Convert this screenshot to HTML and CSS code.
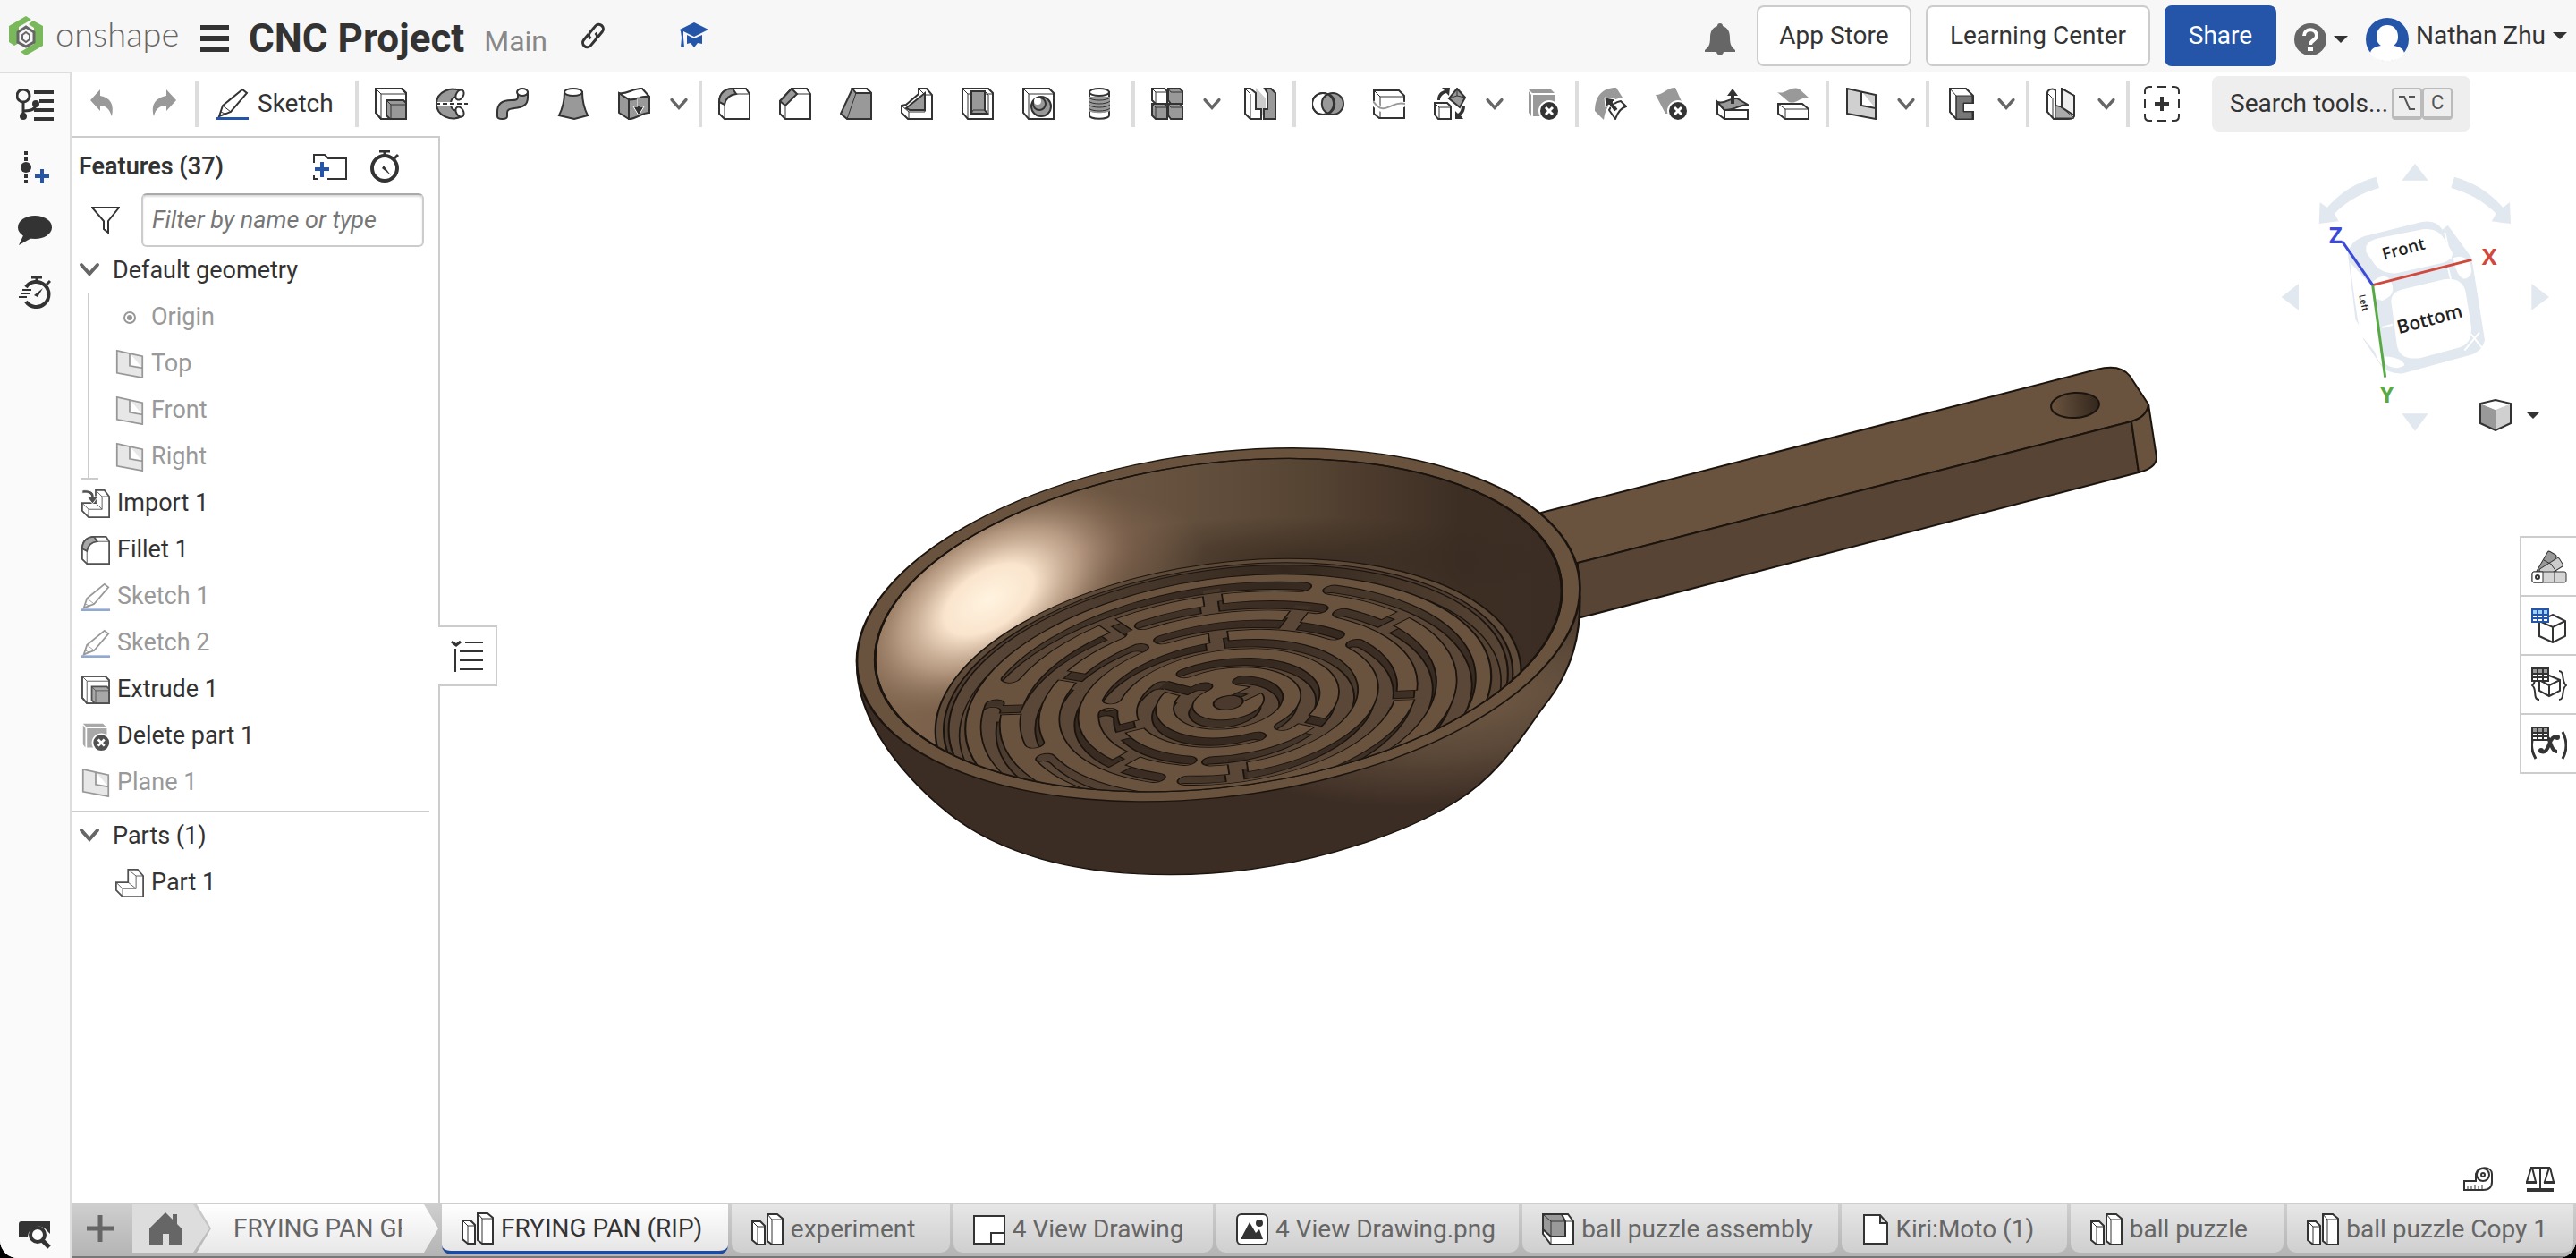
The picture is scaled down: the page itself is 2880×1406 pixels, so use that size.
FILE: index.html
```html
<!DOCTYPE html>
<html lang="en">
<head>
<meta charset="utf-8">
<title>CNC Project | FRYING PAN (RIP)</title>
<link rel="stylesheet" href="styles.css">
</head>
<body>
<svg class="sprite" aria-hidden="true">
  <defs>
    <symbol id="i-chev" viewBox="0 0 24 16"><path d="M3 3l9 10 9-10" fill="none" stroke="#666" stroke-width="4" stroke-linecap="round"/></symbol>
    <symbol id="i-caret" viewBox="0 0 16 8"><path d="M0 0h16l-8 8z" fill="#333"/></symbol>
    <symbol id="i-undo" viewBox="0 0 36 36"><path d="M5 14L16 2v7c11 2 16 9 13 23-3-9-7-12-13-12v6z" fill="#999"/></symbol>
    <symbol id="i-redo" viewBox="0 0 36 36"><path d="M33 14L22 2v7C11 11 4 18 8 32c2-9 7-12 14-12v6z" fill="#999"/></symbol>
    <symbol id="i-sketch" viewBox="0 0 36 36"><path class="o" d="M3 32l4-12L29 2l5 4-18 21z" fill="none"/><path class="t" d="M7 20l9 7M5 27l4 2"/><path d="M0 33h36v3H0z" fill="#2455a8"/></symbol>
    <symbol id="i-extrude" viewBox="0 0 36 36"><path class="o" d="M1 1h29l5 5v29H7l-6-7z"/><path class="t" d="M1 1l6 6v28M7 7h28"/><path class="g" d="M13 14h19l3 3v18H17l-4-4z"/><path class="t" d="M13 14l5 5h17M18 19v16"/><path class="n" d="M1 1h29l5 5v29H7l-6-7z"/></symbol>
    <symbol id="i-revolve" viewBox="0 0 36 36"><path class="g" d="M28 4C18-2 1 4 1 18s17 20 28 14c3-3 2-6-2-9-3 4-10 3-10-5s7-9 10-5c4-2 5-6 1-9z"/><ellipse class="o" cx="27" cy="8" rx="4" ry="6" transform="rotate(30 27 8)"/><ellipse class="o" cx="27" cy="27" rx="4" ry="6" transform="rotate(-30 27 27)"/><path d="M2 18h34" stroke="#fff" stroke-width="4"/><path d="M0 18h36" stroke="#333" stroke-width="2" stroke-dasharray="5 3"/></symbol>
    <symbol id="i-sweep" viewBox="0 0 36 36"><path class="g" d="M24 5v5c0 4-3 4-8 4C6 14 1 18 1 27v5c0 4 11 4 11 0v-4c0-4 3-4 8-5 10-1 15-4 15-12V5z"/><ellipse class="o" cx="29" cy="5" rx="6" ry="4"/></symbol>
    <symbol id="i-loft" viewBox="0 0 36 36"><path class="g" d="M8 5c0 12-3 20-6 26l17 4 15-4c-3-6-6-14-6-26z"/><ellipse class="o" cx="18" cy="5" rx="10" ry="4"/></symbol>
    <symbol id="i-thicken" viewBox="0 0 36 36"><path class="g" d="M1 6l11 7v22L1 28z"/><path class="g" d="M12 13c7 2 13-5 23-3v18c-9 0-14 7-23 7z"/><path class="o" d="M1 6c9 2 16-6 26-5l8 9c-10-2-16 5-23 3z"/><path d="M22 11v10h-5l6 10 6-10h-5V11z" fill="#333" stroke="#fff"/></symbol>
    <symbol id="i-fillet" viewBox="0 0 36 36"><path class="o" d="M1 16C1 6 8 1 16 1h15l4 6v28H7l-6-6z"/><path class="g" d="M1 16C1 6 8 1 16 1l4 6C12 8 8 13 7 19z"/><path class="t" d="M7 19v16M20 7h15"/></symbol>
    <symbol id="i-chamfer" viewBox="0 0 36 36"><path class="o" d="M1 15L14 1h17l4 6v28H7l-6-6z"/><path class="g" d="M1 15L14 1l6 6L7 20z"/><path class="t" d="M7 20v15M20 7h15"/></symbol>
    <symbol id="i-draft" viewBox="0 0 36 36"><path class="g" d="M14 1h16l5 5v29H8l-7-6z"/><path class="o" d="M14 1h16l5 5H18z"/><path class="t" d="M18 6L8 35"/></symbol>
    <symbol id="i-rib" viewBox="0 0 36 36"><path class="o" d="M1 20l5-1 14-12V1h9l6 7v27H8l-7-7z"/><path class="g" d="M6 23L27 6v19H10z"/><path class="t" d="M1 20l8 7v8M9 27h18V8h8M20 1l7 7"/></symbol>
    <symbol id="i-shell" viewBox="0 0 36 36"><path class="o" d="M1 1h29l5 5v29H7l-6-7z"/><path class="t" d="M1 1l6 6v28M7 7h28"/><path class="g" d="M11 4h15v21l3 4H11z"/><path class="t" d="M26 4l4 4v21H11l2-4h13"/></symbol>
    <symbol id="i-hole" viewBox="0 0 36 36"><path class="o" d="M1 1h29l5 5v29H7l-6-7z"/><path class="t" d="M1 1l6 6v28M7 7h28"/><circle class="g" cx="21" cy="21" r="11"/><circle class="g" cx="19" cy="18" r="7"/><circle cx="17" cy="15" r="4" fill="#fff"/></symbol>
    <symbol id="i-thread" viewBox="0 0 36 36"><path class="o" d="M7 5v26c0 5 22 5 22 0V5z"/><path d="M6 10h24v16c-4 3-20 3-24 0z" fill="#999"/><ellipse class="o" cx="18" cy="5" rx="11" ry="4"/><path class="t" d="M6 11c4 4 20 4 24 0M6 15c4 4 20 4 24 0M6 19c4 4 20 4 24 0M6 23c4 4 20 4 24 0"/></symbol>
    <symbol id="i-pattern" viewBox="0 0 36 36"><path class="o" d="M1 1h14l3 3v14H5l-4-4z"/><path class="g" d="M19 1h13l3 3v14H22l-3-4zM1 18h14l3 3v14H5l-4-4zM19 18h13l3 3v14H22l-3-4z"/><path class="t" d="M1 1l4 4h13M5 5v13M19 1l3 4h13M1 18l4 4h13M5 22v13M19 18l3 4h13"/></symbol>
    <symbol id="i-mirror" viewBox="0 0 36 36"><path d="M13 0l11 12v22L13 22z" fill="#ccc"/><path class="o" d="M1 1h6l6 5v18h6v11H7l-6-6z"/><path class="t" d="M1 1l6 6v28"/><path class="g" d="M23 1h7l5 5v29H22V24h4V6z"/></symbol>
    <symbol id="i-bool" viewBox="0 0 36 36"><circle class="g" cx="23" cy="18" r="12"/><circle class="o" cx="12" cy="18" r="12"/><path class="g" d="M18 7a12 12 0 0 1 0 22 12 12 0 0 1 0-22z"/><circle class="n" cx="12" cy="18" r="12"/></symbol>
    <symbol id="i-split" viewBox="0 0 36 36"><path class="o" d="M1 3h28l6 6v25H7l-6-5z"/><path class="t" d="M1 3l7 7h27M8 10v24"/><path d="M0 16c9 12 14 8 19 6s9-5 17-3" fill="none" stroke="#fff" stroke-width="6"/><path d="M0 15c9 12 14 8 19 6s9-5 17-3" fill="none" stroke="#999" stroke-width="2"/></symbol>
    <symbol id="i-transform" viewBox="0 0 36 36"><path class="o" d="M1 17h14l4 4v14H5l-4-5z"/><path class="t" d="M1 17l5 5h13M6 22v13"/><path class="g" d="M26 1l9 10-6 11-12-10z"/><path class="t" d="M26 1v8l9 2M26 9l-9 3"/><path d="M4 14C4 7 8 4 12 3l-3-3h9l-1 9-3-3c-4 1-7 4-7 8zM35 20c0 6-2 9-5 11l3 4h-9v-9l3 3c3-2 4-5 4-9z" fill="#333"/></symbol>
    <symbol id="i-delete" viewBox="0 0 36 36"><path d="M2 2h25l4 4H6zM2 4l3 4v24l-3-4zM7 8h25v24H7z" fill="#999"/><circle cx="25" cy="26" r="11" fill="#333" stroke="#fff" stroke-width="2"/><path d="M21 22l8 8m0-8l-8 8" stroke="#fff" stroke-width="3"/></symbol>
    <symbol id="i-moveface" viewBox="0 0 36 36"><path d="M0 26C0 10 8 0 24 0l7 11C20 12 12 20 10 36z" fill="#999"/><path class="o" d="M16 25c3-6 7-9 13-10l6 6c-7 2-10 8-12 14z"/><path d="M11 11l12 2-3 3 6 8-4 3-6-8-4 3z" fill="#333" stroke="#fff"/></symbol>
    <symbol id="i-delface" viewBox="0 0 36 36"><path d="M0 8c9 0 12-8 22-8l11 24c-9-2-14 6-22 5z" fill="#999"/><circle cx="25" cy="26" r="11" fill="#333" stroke="#fff" stroke-width="2"/><path d="M21 22l8 8m0-8l-8 8" stroke="#fff" stroke-width="3"/></symbol>
    <symbol id="i-pushface" viewBox="0 0 36 36"><path class="o" d="M1 16l8 9v10L1 29zM9 25h26v10H9z"/><path class="g" d="M1 16c9 3 13-5 22-4l12 7c-9 0-14 6-26 6z"/><path d="M18 1l6 8h-4v9h-4V9h-4z" fill="#333"/></symbol>
    <symbol id="i-offset" viewBox="0 0 36 36"><path d="M0 5c9 3 14-7 24-4l11 10c-9-1-14 8-22 5z" fill="#999"/><path class="o" d="M1 18h27l7 6v11H9l-8-6z"/><path class="t" d="M1 18l8 6h26M9 24v11"/></symbol>
    <symbol id="i-plane" viewBox="0 0 36 36"><path d="M2 1l32 7v27L2 29zM18 4v16l16 3" fill="#d0d0d0" stroke="#333" stroke-width="2"/></symbol>
    <symbol id="i-frame" viewBox="0 0 36 36"><path class="o" d="M5 1h18l8 8v8h-11v10h11v8H12l-7-8z"/><path d="M12 9h18v8H20v10h10v8H12z" fill="#777" stroke="#333"/><path class="t" d="M5 1l7 8v26"/></symbol>
    <symbol id="i-sheet" viewBox="0 0 36 36"><path class="o" d="M2 6c0-4 6-6 9-3v17l7 2V1l14 8v22c0 4-4 4-7 4H9l-7-8z"/><path d="M11 20l7 2 14 12H11z" fill="#aaa" stroke="#333"/><path d="M18 1l14 8v22L18 22z" fill="#eee" stroke="#333" stroke-width="2"/><path class="t" d="M2 6l6 6v22"/></symbol>
    <symbol id="i-custom" viewBox="0 0 42 42"><path d="M2 10V7c0-3 2-5 5-5h3M16 2h10M32 2h3c3 0 5 2 5 5v3M40 16v10M40 32v3c0 3-2 5-5 5h-3M26 40H16M10 40H7c-3 0-5-2-5-5v-3M2 26V16" fill="none" stroke="#333" stroke-width="2"/><path d="M21 13v16M13 21h16" stroke="#333" stroke-width="4"/></symbol>
    <symbol id="i-stopwatch" viewBox="0 0 36 36"><circle cx="18" cy="20" r="14" fill="none" stroke="#333" stroke-width="4"/><path d="M12 1h12M18 1v5M29 9l4-4" stroke="#333" stroke-width="3"/><path d="M17 17l8 11-10-8z" fill="#333"/></symbol>
    <symbol id="i-origin" viewBox="0 0 32 32"><circle cx="16" cy="16" r="6" fill="none" stroke="#333" stroke-width="2"/><circle cx="16" cy="16" r="3" fill="#333"/></symbol>
    <symbol id="i-part" viewBox="0 0 36 36"><path class="o" d="M1 17h15V1h12l7 8v26H9l-8-8z"/><path class="t" d="M1 17l8 8h17V9h9M16 1l10 8M16 17l10 8M9 25v10"/></symbol>
    <symbol id="i-import" viewBox="0 0 36 36"><path class="o" d="M1 17h17V1h11l6 8v26H9l-8-8z"/><path class="t" d="M1 17l8 8h17V9h9M18 1l8 8M18 17l8 8M9 25v10"/><path d="M1 1c8-1 15 1 15 8h5l-7 9-7-9h5c0-4-5-5-11-4z" fill="#333" stroke="#fff"/></symbol>
    <symbol id="i-parts" viewBox="0 0 36 36"><path class="o" d="M1 9h9l5 5v21H7l-6-5z"/><path class="o" d="M18 1h11l6 5v29H23l-5-4z"/><path class="t" d="M1 9l6 6h8M7 15v20M18 1l5 6h12M23 7v28"/></symbol>
    <symbol id="i-drawing" viewBox="0 0 36 36"><path class="o" d="M1 3h34v31H1zM20 34V22h15"/></symbol>
    <symbol id="i-image" viewBox="0 0 36 36"><rect class="o" x="1" y="1" width="34" height="34" rx="5"/><path d="M5 29L15 10l7 12 4-4 4 11z" fill="#333"/><circle cx="26" cy="11" r="4" fill="#333"/></symbol>
    <symbol id="i-assembly" viewBox="0 0 36 36"><path class="o" d="M1 1h28l6 8v26H10l-9-12z"/><path class="g" d="M1 1h21l4 8v17H10L1 18z"/><path class="t" d="M1 1l9 8h25M10 9v26"/></symbol>
    <symbol id="i-file" viewBox="0 0 28 36"><path class="o" d="M1 2h18l8 9v23H1zM19 2v9h8"/></symbol>
  </defs>
</svg>

<div class="app">
  <header class="top">
    <a class="logo" href="#">
      <svg class="logo-mark" viewBox="0 0 38 44"><path d="M19 0l6 4-14 8v18l-5 3-6-4V11zM27 5l11 6v22L19 44l-6-4 15-9V13l-6-4z" fill="#7ab85c"/><path d="M19 12l9 6v11l-9 5-9-5V18z" fill="none" stroke="#666" stroke-width="3"/><path d="M19 18l4 3v5l-4 3-4-3v-5z" fill="none" stroke="#666" stroke-width="2"/></svg>
      <span>onshape</span>
    </a>
    <button class="menu" aria-label="Document menu"><i></i><i></i><i></i></button>
    <h1>CNC Project</h1>
    <span class="branch">Main</span>
    <button class="link-btn" aria-label="Copy link"><svg width="30" height="30" viewBox="0 0 30 30"><g fill="none" stroke="#333" stroke-width="3" transform="rotate(-50 15 15)"><path d="M13 10H5a5 5 0 0 0 0 10h9a5 5 0 0 0 5-5"/><path d="M17 20h8a5 5 0 0 0 0-10h-9a5 5 0 0 0-5 5"/></g></svg></button>
    <svg class="cap" viewBox="0 0 32 30"><path d="M16 0l16 8-16 8L4 10v7l1 11H1l1-11-1-7-1-2zM8 14l8 4 9-4v10l-5-1-4 5-4-5-4 1z" fill="#2455a8"/></svg>
    <div class="account">
      <svg class="bell" viewBox="0 0 34 36"><path d="M17 0c2 0 3 1 3 3 6 2 8 7 8 13 0 8 2 11 6 14v2H21c-1 5-7 5-8 0H0v-2c4-3 6-6 6-14C6 10 8 5 14 3c0-2 1-3 3-3z" fill="#666"/></svg>
      <button class="btn app-store">App Store</button>
      <button class="btn learning">Learning Center</button>
      <button class="btn share">Share</button>
      <button class="help" aria-label="Help"><svg width="36" height="36" viewBox="0 0 36 36"><circle cx="18" cy="18" r="18" fill="#666"/><path d="M11 14c0-9 14-9 14 0 0 5-7 5-7 10" fill="none" stroke="#fff" stroke-width="4"/><path d="M15 27h6v4h-6z" fill="#fff"/></svg><svg width="16" height="8"><use href="#i-caret"/></svg></button>
      <button class="user"><svg width="48" height="48" viewBox="0 0 48 48"><circle cx="24" cy="24" r="24" fill="#2455a8"/><path d="M24 8c8 0 12 6 12 13 0 5-2 8-5 10 7 1 12 4 12 9-8 11-30 11-38 0 0-5 5-8 12-9-3-2-5-5-5-10 0-7 4-13 12-13z" fill="#fff"/></svg><span>Nathan Zhu</span><svg width="16" height="8"><use href="#i-caret"/></svg></button>
    </div>
  </header>

  <nav class="rail" aria-label="Side panels">
    <button aria-label="Versions"><svg width="42" height="36" viewBox="0 0 42 36"><circle cx="8" cy="8" r="7" fill="none" stroke="#333" stroke-width="3"/><path d="M8 15v18M9 25c8 0 13-2 13-8" fill="none" stroke="#333" stroke-width="3"/><circle cx="8" cy="31" r="4" fill="#333"/><circle cx="22" cy="17" r="4" fill="#333"/><path d="M20 4h22M26 14h16M20 24h22M20 34h22" stroke="#333" stroke-width="4"/></svg></button>
    <button aria-label="Insert"><svg width="36" height="36" viewBox="0 0 36 36"><path d="M8 0v4m0 2v5M8 26v4m0 2v4" stroke="#333" stroke-width="4"/><circle cx="8" cy="18" r="6" fill="#333"/><path d="M26 20v16M18 28h16" stroke="#2455a8" stroke-width="4"/></svg></button>
    <button aria-label="Comments"><svg width="40" height="36" viewBox="0 0 40 36"><ellipse cx="20" cy="15" rx="19" ry="13" fill="#333"/><path d="M8 22L2 35l16-9z" fill="#333"/></svg></button>
    <button aria-label="Performance"><svg width="36" height="36" viewBox="0 0 36 36"><path d="M8 12A14 14 0 1 1 8 28" fill="none" stroke="#333" stroke-width="4"/><path d="M14 1h12M20 1v5M31 9l4-4" stroke="#333" stroke-width="3"/><path d="M27 13l-6 10-4-2z" fill="#333"/><path d="M4 15h10M2 19h10M0 23h9" stroke="#333" stroke-width="2"/></svg></button>
    <button class="rail-search" aria-label="Search tabs"><svg width="38" height="32" viewBox="0 0 38 32"><path d="M4 1h32v14l-3-3a12 12 0 0 0-22 6H1V4c0-2 1-3 3-3z" fill="#333"/><circle cx="22" cy="16" r="8" fill="none" stroke="#333" stroke-width="4"/><path d="M27 22l8 8" stroke="#333" stroke-width="5"/></svg></button>
  </nav>

  <div class="toolbar">
    <button class="tool" aria-label="Undo"><svg><use href="#i-undo"/></svg></button>
    <button class="tool" aria-label="Redo"><svg><use href="#i-redo"/></svg></button>
    <span class="sep"></span>
    <button class="sketch"><svg><use href="#i-sketch"/></svg>Sketch</button>
    <span class="sep"></span>
    <button class="tool" aria-label="Extrude"><svg><use href="#i-extrude"/></svg></button>
    <button class="tool" aria-label="Revolve"><svg><use href="#i-revolve"/></svg></button>
    <button class="tool" aria-label="Sweep"><svg><use href="#i-sweep"/></svg></button>
    <button class="tool" aria-label="Loft"><svg><use href="#i-loft"/></svg></button>
    <button class="tool" aria-label="Thicken"><svg><use href="#i-thicken"/></svg></button>
    <button class="more" aria-label="More solids"><svg><use href="#i-chev"/></svg></button>
    <span class="sep"></span>
    <button class="tool" aria-label="Fillet"><svg><use href="#i-fillet"/></svg></button>
    <button class="tool" aria-label="Chamfer"><svg><use href="#i-chamfer"/></svg></button>
    <button class="tool" aria-label="Draft"><svg><use href="#i-draft"/></svg></button>
    <button class="tool" aria-label="Rib"><svg><use href="#i-rib"/></svg></button>
    <button class="tool" aria-label="Shell"><svg><use href="#i-shell"/></svg></button>
    <button class="tool" aria-label="Hole"><svg><use href="#i-hole"/></svg></button>
    <button class="tool" aria-label="Thread"><svg><use href="#i-thread"/></svg></button>
    <span class="sep"></span>
    <button class="tool" aria-label="Linear pattern"><svg><use href="#i-pattern"/></svg></button>
    <button class="more" aria-label="More patterns"><svg><use href="#i-chev"/></svg></button>
    <button class="tool" aria-label="Mirror"><svg><use href="#i-mirror"/></svg></button>
    <span class="sep"></span>
    <button class="tool" aria-label="Boolean"><svg><use href="#i-bool"/></svg></button>
    <button class="tool" aria-label="Split"><svg><use href="#i-split"/></svg></button>
    <button class="tool" aria-label="Transform"><svg><use href="#i-transform"/></svg></button>
    <button class="more" aria-label="More transforms"><svg><use href="#i-chev"/></svg></button>
    <button class="tool" aria-label="Delete part"><svg><use href="#i-delete"/></svg></button>
    <span class="sep"></span>
    <button class="tool" aria-label="Modify fillet"><svg><use href="#i-moveface"/></svg></button>
    <button class="tool" aria-label="Delete face"><svg><use href="#i-delface"/></svg></button>
    <button class="tool" aria-label="Move face"><svg><use href="#i-pushface"/></svg></button>
    <button class="tool" aria-label="Offset surface"><svg><use href="#i-offset"/></svg></button>
    <span class="sep"></span>
    <button class="tool" aria-label="Plane"><svg><use href="#i-plane"/></svg></button>
    <button class="more" aria-label="More planes"><svg><use href="#i-chev"/></svg></button>
    <span class="sep"></span>
    <button class="tool" aria-label="Frame"><svg><use href="#i-frame"/></svg></button>
    <button class="more" aria-label="More frames"><svg><use href="#i-chev"/></svg></button>
    <span class="sep"></span>
    <button class="tool" aria-label="Sheet metal"><svg><use href="#i-sheet"/></svg></button>
    <button class="more" aria-label="More sheet metal"><svg><use href="#i-chev"/></svg></button>
    <span class="sep"></span>
    <button class="tool wide" aria-label="Add custom features"><svg><use href="#i-custom"/></svg></button>
    <button class="search">Search tools... <kbd><svg width="18" height="18" viewBox="0 0 18 18"><path d="M0 2h6l6 14h6M11 2h7" fill="none" stroke="#555" stroke-width="2"/></svg></kbd><kbd>C</kbd></button>
  </div>

  <aside class="features">
    <div class="features-head">
      <h2>Features (37)</h2>
      <button aria-label="Add folder"><svg width="38" height="36" viewBox="0 0 38 36"><path d="M1 14V5h12l4 4h20v23H16M1 28v4h4" fill="none" stroke="#333" stroke-width="2"/><path d="M10 13v17M2 21h16" stroke="#2455a8" stroke-width="4"/></svg></button>
      <button aria-label="Rebuild times"><svg width="36" height="36"><use href="#i-stopwatch"/></svg></button>
    </div>
    <div class="filter">
      <svg width="32" height="32" viewBox="0 0 32 32"><path d="M1 2h30L19 17v13l-5-4v-9z" fill="none" stroke="#333" stroke-width="2"/></svg>
      <input type="text" placeholder="Filter by name or type" aria-label="Filter by name or type">
    </div>
    <ul class="tree">
      <li class="group"><svg class="ch"><use href="#i-chev"/></svg>Default geometry
        <ul>
          <li class="dim"><svg><use href="#i-origin"/></svg>Origin</li>
          <li class="dim"><svg><use href="#i-plane"/></svg>Top</li>
          <li class="dim"><svg><use href="#i-plane"/></svg>Front</li>
          <li class="dim"><svg><use href="#i-plane"/></svg>Right</li>
        </ul>
      </li>
      <li class="item"><svg><use href="#i-import"/></svg>Import 1</li>
      <li class="item"><svg><use href="#i-fillet"/></svg>Fillet 1</li>
      <li class="item dim"><svg><use href="#i-sketch"/></svg>Sketch 1</li>
      <li class="item dim"><svg><use href="#i-sketch"/></svg>Sketch 2</li>
      <li class="item"><svg><use href="#i-extrude"/></svg>Extrude 1</li>
      <li class="item"><svg><use href="#i-delete"/></svg>Delete part 1</li>
      <li class="item dim"><svg><use href="#i-plane"/></svg>Plane 1</li>
    </ul>
    <ul class="tree parts">
      <li class="group"><svg class="ch"><use href="#i-chev"/></svg>Parts (1)
        <ul class="plain">
          <li><svg><use href="#i-part"/></svg>Part 1</li>
        </ul>
      </li>
    </ul>
  </aside>

  <main class="view">
    <button class="flyout" aria-label="Feature list"><svg width="38" height="36" viewBox="0 0 38 36"><path d="M2 2l5 4 5-4" fill="none" stroke="#333" stroke-width="3"/><path d="M17 3h20M11 13h26M11 23h26M11 33h26M6 10v26" stroke="#333" stroke-width="2"/></svg></button>

    <svg class="model" viewBox="940 390 1490 600" role="img" aria-label="Frying pan model">
      <defs>
        <linearGradient id="wall"><stop offset="0" stop-color="#80654e"/><stop offset=".4" stop-color="#685340"/><stop offset=".62" stop-color="#574534"/><stop offset=".85" stop-color="#3d2e24"/><stop offset="1" stop-color="#3b2d23"/></linearGradient>
        <radialGradient id="shine"><stop offset="0" stop-color="#fff4e0"/><stop offset=".3" stop-color="#fae4cd"/><stop offset=".6" stop-color="#c9ab92" stop-opacity=".75"/><stop offset="1" stop-color="#80654e" stop-opacity="0"/></radialGradient>
        <radialGradient id="blush"><stop offset="0" stop-color="#8a6b59" stop-opacity=".9"/><stop offset="1" stop-color="#80654e" stop-opacity="0"/></radialGradient>
        <radialGradient id="shade"><stop offset="0" stop-color="#33271d" stop-opacity=".75"/><stop offset="1" stop-color="#33271d" stop-opacity="0"/></radialGradient>
        <radialGradient id="body" gradientUnits="userSpaceOnUse" cx="0" cy="0" r="1" gradientTransform="matrix(520 -150 60 330 1310 900)"><stop offset="0" stop-color="#715a45"/><stop offset=".5" stop-color="#5c4939"/><stop offset="1" stop-color="#3c2d24"/></radialGradient>
        <linearGradient id="groove" gradientUnits="userSpaceOnUse" x1="-540" x2="540" y1="0" y2="0"><stop offset="0" stop-color="#5b4839"/><stop offset=".3" stop-color="#46372b"/><stop offset=".6" stop-color="#35281f"/><stop offset=".8" stop-color="#3b2d23"/><stop offset="1" stop-color="#4b3b2e"/></linearGradient>
        <linearGradient id="gap" gradientUnits="userSpaceOnUse" x1="-580" x2="580" y1="0" y2="0"><stop offset="0" stop-color="#5c493a"/><stop offset=".3" stop-color="#4a3a2d"/><stop offset=".6" stop-color="#33271d"/><stop offset="1" stop-color="#594636"/></linearGradient>
        <linearGradient id="bore"><stop offset="0" stop-color="#6b543f"/><stop offset="1" stop-color="#32261c"/></linearGradient>
        <clipPath id="bowl"><circle r="698" transform="matrix(1 -.1645 0 .781 788 656)"/></clipPath>
        <g id="maze" fill="none" stroke-linecap="round">
          <circle r="485" pathLength="360" stroke-dasharray="84 276" transform="rotate(-156)"/>
          <circle r="485" pathLength="360" stroke-dasharray="255 105" transform="rotate(-64)"/>
          <circle r="405" pathLength="360" stroke-dasharray="52 308" transform="rotate(-115)"/>
          <circle r="405" pathLength="360" stroke-dasharray="212 148" transform="rotate(-55)"/>
          <circle r="405" pathLength="360" stroke-dasharray="69 291" transform="rotate(167)"/>
          <circle r="325" pathLength="360" stroke-dasharray="66 294" transform="rotate(-114)"/>
          <circle r="325" pathLength="360" stroke-dasharray="142 218" transform="rotate(-37)"/>
          <circle r="325" pathLength="360" stroke-dasharray="119 241" transform="rotate(117)"/>
          <circle r="245" pathLength="360" stroke-dasharray="263 97" transform="rotate(-165)"/>
          <circle r="245" pathLength="360" stroke-dasharray="72 288" transform="rotate(110)"/>
          <circle r="167" pathLength="360" stroke-dasharray="168 192" transform="rotate(-121)"/>
          <circle r="167" pathLength="360" stroke-dasharray="146 214" transform="rotate(70)"/>
          <circle r="92" pathLength="360" stroke-dasharray="308 52" transform="rotate(-72)"/>
          <g stroke-linecap="butt">
            <path d="M400 0h90" transform="rotate(-94)"/><path d="M400 0h90" transform="rotate(-122)"/><path d="M400 0h90" transform="rotate(-40)"/><path d="M400 0h90" transform="rotate(-172)"/>
            <path d="M320 0h90" transform="rotate(-68)"/><path d="M320 0h90" transform="rotate(7)"/><path d="M320 0h90" transform="rotate(-151)"/>
            <path d="M240 0h90" transform="rotate(-94)"/><path d="M240 0h90" transform="rotate(137)"/><path d="M240 0h90" transform="rotate(86)"/>
            <path d="M162 0h90" transform="rotate(34)"/><path d="M162 0h90" transform="rotate(163)"/>
            <path d="M88 0h80" transform="rotate(-143)"/><path d="M20 0h70" transform="rotate(-37)"/>
          </g>
        </g>
        <mask id="cut" maskUnits="userSpaceOnUse" x="-560" y="-560" width="1120" height="1120"><use href="#maze" stroke="#fff" stroke-width="35"/></mask>
      </defs>
      <g stroke="#1b140e" stroke-width="2" stroke-linejoin="round">
        <path d="M1723 573L2344 413Q2370 406 2381 420L2402 452Q2404 464 2383 471L1764 629 1740 640z" fill="#69533f"/>
        <path d="M1764 629L2383 471 2391 528 1764 691z" fill="#574434"/>
        <path d="M2383 471Q2400 466 2402 452L2411 511Q2411 523 2391 528z" fill="#69533f"/>
        <ellipse cx="2320" cy="453" rx="27" ry="14" fill="url(#bore)" transform="rotate(-4 2320 453)"/>
      </g>
      <g transform="translate(930 480) scale(.5485 .3333)">
        <path d="M51 790C52 950 120 1130 240 1290C340 1420 490 1493 690 1493C930 1493 1150 1370 1270 1250C1370 1150 1420 990 1460 910C1510 800 1526 690 1525 560z" fill="url(#body)" stroke="#1b140e" stroke-width="4"/>
        <circle r="737" transform="matrix(1 -.1655 0 .787 788 655)" fill="#69533f" stroke="#1b140e" stroke-width="5"/>
        <circle r="700" transform="matrix(1 -.1645 0 .781 788 656)" fill="url(#wall)" stroke="#1b140e" stroke-width="5"/>
        <g clip-path="url(#bowl)">
          <ellipse cx="960" cy="440" rx="480" ry="150" fill="url(#shade)"/>
          <ellipse cx="520" cy="400" rx="240" ry="200" fill="url(#blush)"/>
          <ellipse cx="320" cy="570" rx="440" ry="240" transform="rotate(-60 320 570)" fill="url(#shine)"/>
          <g transform="matrix(1 -.1655 0 .787 808 913)" stroke="#1b140e" stroke-width="4">
            <circle r="597" fill="#5e4a39"/>
            <circle r="580" fill="#4d3c2f"/>
            <circle r="570" fill="url(#gap)"/>
          </g>
          <g transform="matrix(1 -.1655 0 .787 812 936)"><circle r="552" fill="url(#gap)" stroke="#1b140e" stroke-width="3"/></g>
          <g transform="matrix(1 -.1655 0 .787 808 916)">
            <circle r="536" fill="#69533f" stroke="#1b140e" stroke-width="4"/>
            <use href="#maze" stroke="#1b140e" stroke-width="42"/>
            <use href="#maze" stroke="url(#groove)" stroke-width="35"/>
            <g mask="url(#cut)">
              <g transform="translate(-7 30)">
                <use href="#maze" stroke="#1b140e" stroke-width="41"/>
                <use href="#maze" stroke="#5a4737" stroke-width="34"/>
              </g>
            </g>
            <circle r="30" fill="#4a392c" stroke="#1b140e" stroke-width="4"/>
          </g>
        </g>
        <circle r="700" transform="matrix(1 -.1645 0 .781 788 656)" fill="none" stroke="#1b140e" stroke-width="5"/>
      </g>
    </svg>

    <svg class="cube" viewBox="0 0 1080 1020" role="img" aria-label="View cube">
      <g fill="#e2e8ef">
        <path d="M540 68l44 57h-88zM540 965l44-58h-88zM92 516l58-45v89zM990 516l-59-45v89z"/>
        <path d="M410 113l10 37Q330 175 270 236l14 26-66 8 3-72 24 18Q310 140 410 113zM672 113l-11 37Q750 175 812 236l-15 26 64 8-3-72-23 18Q770 140 672 113z"/>
        <path d="M315 372Q320 330 370 312L560 265Q610 255 632 290L650 275 730 385 774 660Q765 700 720 712L500 772Q450 775 425 745L365 655 375 650 340 590z"/>
      </g>
      <path d="M376 345Q385 325 420 318L570 288Q620 285 640 325L665 365Q670 390 630 402L480 436Q425 440 400 400L376 365zM460 530Q460 500 500 490L640 456Q700 450 710 500L728 610Q735 670 690 685L560 720Q490 730 480 680z" fill="#fff"/>
      <path d="M322 400L396 480 436 745Q420 745 405 700L360 645Q345 600 322 400z" fill="#fff"/>
      <path d="M392 470Q440 425 460 465 480 510 430 528L402 520zM668 385Q700 370 724 400 740 450 705 455 680 450 668 385zM438 715Q500 720 505 745 480 765 440 740z" fill="#fff"/>
      <path d="M430 618l35-10M650 415l10 40M706 695l50-60M728 640l40 50M640 300l20 90" stroke="#fff" stroke-width="6"/>
      <g font-family="Open Sans, sans-serif" font-weight="600" fill="#222">
        <text x="436" y="392" font-size="56" transform="rotate(-15 436 392)">Front</text>
        <text x="486" y="640" font-size="62" transform="rotate(-15 486 640)">Bottom</text>
        <text x="352" y="510" font-size="30" transform="rotate(78 352 510)">Left</text>
      </g>
      <g stroke-width="9"><path d="M398 476L730 391" stroke="#d0493f"/><path d="M398 476L440 785" stroke="#57a945"/><path d="M398 476L295 328" stroke="#3c4ad8"/></g>
      <g font-family="Open Sans, sans-serif" font-weight="700" font-size="76"><text x="252" y="335" fill="#3c4ad8">Z</text><text x="764" y="407" fill="#d0493f">X</text><text x="422" y="869" fill="#57a945">Y</text></g>
    </svg>
    <button class="shade-mode" aria-label="View options"><svg width="36" height="36" viewBox="0 0 36 36"><path d="M18 12v23L1 27V5z" fill="#999"/><path d="M18 12v23l17-8V5z" fill="#d0d0d0"/><path d="M18 1l17 4-17 7L1 5z" fill="#fff"/><path class="n" d="M18 1l17 4v22l-17 8-17-8V5z"/></svg><svg width="16" height="8"><use href="#i-caret"/></svg></button>

    <div class="side-tools">
      <button aria-label="Appearances"><svg width="40" height="40" viewBox="0 0 40 40"><g stroke="#333"><rect x="11" y="3" width="11" height="30" rx="2" fill="#999" transform="rotate(30 16 18)"/><rect x="17" y="8" width="11" height="26" rx="2" fill="#ccc" transform="rotate(58 22 21)"/><path d="M14 13l9 5M23 19l6 8"/><rect x="1" y="26" width="38" height="12" rx="2" fill="#d5d5d5"/><path d="M3 26h10v12H3q-2 0-2-2v-8q0-2 2-2z" fill="#fff"/><path d="M26 26v12"/><circle cx="7" cy="32" r="2" fill="#fff" stroke-width="2"/></g></svg></button>
      <button aria-label="Configurations"><svg width="40" height="40" viewBox="0 0 40 40"><path class="o" d="M24 8l14 7v17l-14 7-15-7V15zM9 15l15 7 14-7M24 22v17"/><path d="M0 1h20v16H0z" fill="#2455a8"/><path d="M2 3h4v4H2zm6 0h4v4H8zm6 0h4v4h-4z" fill="#9fd0f5"/><path d="M2 9h4v2H2zm6 0h4v2H8zm6 0h4v2h-4zM2 13h4v2H2zm6 0h4v2H8zm6 0h4v2h-4z" fill="#fff"/></svg></button>
      <button aria-label="Configuration variables"><svg width="40" height="40" viewBox="0 0 40 40"><path class="o" d="M20 10l12 5v12l-12 6-11-6V15zM9 15l11 6 12-6M20 21v12"/><path d="M9 37c-8 0-2-12-8-16 6-4 0-10 4-14M31 5c7 0 2 12 8 16-6 4-1 16-8 16" fill="none" stroke="#333" stroke-width="2"/><path d="M0 1h20v16H0z" fill="#333"/><path d="M2 3h4v4H2zm6 0h4v4H8zm6 0h4v4h-4z" fill="#999"/><path d="M2 9h4v2H2zm6 0h4v2H8zm6 0h4v2h-4zM2 13h4v2H2zm6 0h4v2H8zm6 0h4v2h-4z" fill="#fff"/></svg></button>
      <button aria-label="Variables"><svg width="40" height="40" viewBox="0 0 40 40"><path d="M5 37Q-3 23 3 10M35 7q8 15 0 30" fill="none" stroke="#333" stroke-width="3"/><path d="M11 29c4 2 7-2 9-8s5-10 9-8M17 13c5 0 4 16 12 16" fill="none" stroke="#333" stroke-width="4"/><circle cx="11" cy="28" r="3" fill="#333"/><circle cx="29" cy="13" r="3" fill="#333"/><path d="M0 1h20v16H0z" fill="#333"/><path d="M2 3h4v4H2zm6 0h4v4H8zm6 0h4v4h-4z" fill="#999"/><path d="M2 9h4v2H2zm6 0h4v2H8zm6 0h4v2h-4zM2 13h4v2H2zm6 0h4v2H8zm6 0h4v2h-4z" fill="#fff"/></svg></button>
    </div>

    <div class="measure">
      <button aria-label="Measure"><svg width="34" height="28" viewBox="0 0 34 28"><path class="o" d="M1 16h13V8c2-9 18-9 18 0v9c0 7-5 9-10 9H1z"/><circle class="o" cx="22" cy="9" r="7"/><circle class="n" cx="22" cy="9" r="2"/><path class="t" d="M5 25v-4m4 4v-3m4 3v-5m4 5v-3m4 3v-5"/></svg></button>
      <button aria-label="Mass properties"><svg width="32" height="28" viewBox="0 0 32 28"><path d="M5 1h22M16 1v23M6 1L1 17h10L7 1M26 1l-5 16h10L27 1" fill="none" stroke="#333" stroke-width="2"/><path d="M0 16h12v3H0zM20 16h12v3H20zM1 24h30v4H1z" fill="#333"/></svg></button>
    </div>
  </main>

  <footer class="tabs">
    <button class="add" aria-label="Insert new tab"><svg width="30" height="30" viewBox="0 0 30 30"><path d="M15 0v30M0 15h30" stroke="#666" stroke-width="5"/></svg></button>
    <div class="crumbs">
      <button class="home" aria-label="Home"><svg width="36" height="36" viewBox="0 0 36 36"><path d="M18 0l8 8V2h5v11l5 5v18H22V24h-7v12H0V18z" fill="#666"/></svg></button>
      <button class="folder"><span>FRYING PAN GROUP</span></button>
    </div>
    <button class="tab active w322"><svg><use href="#i-parts"/></svg>FRYING PAN (RIP)</button>
    <button class="tab w240"><svg><use href="#i-parts"/></svg>experiment</button>
    <button class="tab w290"><svg><use href="#i-drawing"/></svg>4 View Drawing</button>
    <button class="tab w342"><svg><use href="#i-image"/></svg>4 View Drawing.png</button>
    <button class="tab w358"><svg><use href="#i-assembly"/></svg>ball puzzle assembly</button>
    <button class="tab w248"><svg class="narrow"><use href="#i-file"/></svg>Kiri:Moto (1)</button>
    <button class="tab w234"><svg><use href="#i-parts"/></svg>ball puzzle</button>
    <button class="tab w322"><svg><use href="#i-parts"/></svg>ball puzzle Copy 1</button>
  </footer>
</div>
</body>
</html>
```
FILE: styles.css
```css
* { box-sizing: border-box; }
html { background: #000; }
body {
  margin: 0;
  height: 100vh;
  font-family: Roboto, "Liberation Sans", sans-serif;
  font-size: 28px;
  line-height: 32px;
  color: #333;
}
button {
  margin: 0;
  padding: 0;
  border: 0;
  background: none;
  font: inherit;
  color: inherit;
  display: flex;
  align-items: center;
  justify-content: center;
  white-space: nowrap;
  flex-shrink: 0;
}
svg { display: block; flex-shrink: 0; }
ul { list-style: none; margin: 0; padding: 0; }
.sprite { position: absolute; width: 0; height: 0; }

.o { fill: #fff; stroke: #333; stroke-width: 2; }
.g { fill: #999; stroke: #333; stroke-width: 2; }
.t { fill: none; stroke: #333; stroke-width: 1; }
.n { fill: none; stroke: #333; stroke-width: 2; }

.app {
  height: 100%;
  display: grid;
  grid-template-columns: 80px 412px minmax(0, 1fr);
  grid-template-rows: 80px 72px minmax(0, 1fr) 62px;
  background: #fff;
  border-radius: 0 0 20px 20px;
  overflow: hidden;
}

/* header */
.top {
  grid-column: 1 / -1;
  display: flex;
  align-items: center;
  background: #f7f7f7;
  padding: 0 10px;
}
.logo {
  display: flex;
  align-items: center;
  gap: 14px;
  width: 214px;
  font-family: Lato, sans-serif;
  font-weight: 300;
  font-size: 38px;
  color: #666;
  text-decoration: none;
}
.logo-mark { width: 38px; height: 44px; }
.logo span { padding-bottom: 6px; }
.menu { flex-direction: column; gap: 6px; width: 32px; margin-right: 22px; padding-top: 6px; }
.menu i { width: 32px; height: 6px; background: #333; }
h1 { margin: 0; font-size: 44px; line-height: 48px; font-weight: 700; padding-top: 6px; }
.branch { font-size: 32px; color: #888; padding: 12px 0 0 22px; }
.link-btn { margin-left: 36px; }
.cap { width: 32px; height: 30px; margin-left: 82px; }
.account { margin-left: auto; display: flex; align-items: center; }
.bell { width: 34px; height: 36px; margin: 8px 24px 0 0; }
.btn { height: 68px; border: 2px solid #ccc; border-radius: 8px; background: #fff; }
.app-store { width: 173px; margin-right: 16px; }
.learning { width: 251px; margin-right: 16px; }
.share { width: 125px; margin-right: 20px; background: #2455a8; border-color: #2455a8; color: #fff; }
.help { gap: 8px; margin-right: 20px; padding-top: 8px; }
.user { gap: 8px; }
.user > svg:first-child { margin-top: 8px; }

/* left rail */
.rail {
  grid-row: 2 / -1;
  display: flex;
  flex-direction: column;
  border-top: 2px solid #ddd;
  border-right: 2px solid #ddd;
  background: #fafafa;
}
.rail button { height: 70px; }
.rail .rail-search { margin-top: auto; height: 52px; }

/* toolbar */
.toolbar { grid-column: 2 / -1; display: flex; align-items: center; }
.tool, .more { height: 60px; }
.tool { width: 68px; }
.tool svg { width: 36px; height: 36px; }
.tool.wide svg { width: 42px; height: 42px; }
.more { width: 36px; padding-right: 4px; }
.more svg { width: 22px; height: 14px; }
.sep { width: 4px; height: 52px; margin: 0 2px; background: #ddd; flex-shrink: 0; }
.sketch { width: 171px; padding-left: 18px; gap: 10px; justify-content: flex-start; }
.sketch svg { width: 36px; height: 36px; }
.search {
  margin-left: 22px;
  width: 289px;
  height: 62px;
  padding-left: 20px;
  justify-content: flex-start;
  background: #eee;
  border-radius: 8px;
}
.search kbd {
  display: flex;
  align-items: center;
  justify-content: center;
  width: 34px;
  height: 36px;
  border: 2px solid #bbb;
  border-bottom-width: 4px;
  border-radius: 4px;
  font-family: inherit;
  font-size: 22px;
  color: #555;
}
.search kbd:first-of-type { margin-left: 4px; }

/* feature list */
.features {
  grid-column: 2;
  display: flex;
  flex-direction: column;
  border: 2px solid #ccc;
  border-left: 0;
  border-bottom: 0;
  min-height: 0;
  font-size: 27px;
}
.features-head { display: flex; align-items: center; height: 62px; padding: 2px 42px 0 8px; gap: 24px; }
.features-head h2 { margin: 0 auto 0 0; font-size: 27px; font-weight: 600; }
.filter { display: flex; align-items: center; gap: 24px; padding: 0 16px 0 22px; height: 60px; }
.filter input {
  flex: 1;
  min-width: 0;
  height: 60px;
  padding: 0 10px;
  border: 2px solid #ccc;
  border-top-color: #aaa;
  border-radius: 6px;
  box-shadow: inset 0 2px 2px #ddd;
  font: inherit;
  font-style: italic;
  color: #333;
}
.filter input::placeholder { color: #777; opacity: 1; }
.tree svg { display: inline-block; width: 32px; height: 32px; margin-right: 8px; vertical-align: -8px; opacity: .85; }
.tree li { line-height: 52px; }
.tree .ch { width: 24px; height: 16px; margin-right: 14px; vertical-align: 2px; opacity: 1; }
.tree .group { padding-left: 8px; }
.tree .group ul { margin-left: 10px; padding-left: 29px; border-left: 2px solid #ccc; }
.tree .group ul:not(.plain)::after { content: ""; display: block; width: 20px; height: 2px; margin: -2px 0 0 -39px; background: #ccc; }
.tree .group .plain { border-color: transparent; }
.tree .item { padding-left: 11px; }
.tree .dim { color: #999; }
.tree .dim svg { opacity: .5; }
.parts { margin: 6px 10px 0 0; border-top: 2px solid #ccc; }

/* model view */
.view { grid-column: 3; position: relative; min-height: 0; }
.flyout {
  position: absolute;
  left: -2px;
  top: 547px;
  width: 66px;
  height: 68px;
  border: 2px solid #ccc;
  border-left: 0;
  background: #fff;
}
.model { position: absolute; left: 448px; top: 238px; width: 1490px; height: 600px; }
.cube { position: absolute; right: 0; top: 8px; width: 360px; height: 340px; }
.shade-mode { position: absolute; right: 40px; top: 294px; gap: 16px; }
.side-tools {
  position: absolute;
  right: 0;
  top: 447px;
  width: 63px;
  border: 2px solid #ccc;
  border-width: 2px 0 0 2px;
  background: #fff;
}
.side-tools button { width: 61px; height: 66px; border-bottom: 2px solid #ccc; }
.measure { position: absolute; right: 24px; bottom: 12px; display: flex; gap: 36px; }

/* document tabs */
.tabs {
  grid-column: 2 / -1;
  display: flex;
  gap: 4px;
  align-items: flex-start;
  padding: 2px 3px 0 0;
  color: #666;
  background: linear-gradient(#cfcfcf, #b4b4b4);
  border-bottom: 2px solid #777;
}
.add { width: 64px; height: 54px; }
.crumbs { display: flex; width: 342px; height: 54px; flex-shrink: 0; }
.home { width: 86px; padding-right: 12px; height: 54px; background: #ddd; clip-path: polygon(0 0, 68px 0, 100% 50%, 68px 100%, 0 100%); }
.folder {
  margin-left: -14px;
  flex: 1 1 0;
  min-width: 0;
  height: 54px;
  padding: 0 41px;
  background: linear-gradient(#fff, #e8e8e8);
  clip-path: polygon(0 0, calc(100% - 16px) 0, 100% 50%, calc(100% - 16px) 100%, 0 100%, 16px 50%);
}
.folder span { width: 100%; overflow: hidden; text-align: left; }
.tab {
  height: 54px;
  min-width: 0;
  padding: 2px 0 0 22px;
  gap: 8px;
  justify-content: flex-start;
  overflow: hidden;
  background: linear-gradient(#e6e6e6, #cfcfcf);
  border-radius: 0 0 10px 10px;
}
.tab svg { width: 36px; height: 36px; }
.tab .narrow { width: 28px; margin-left: 2px; }
.tab.active { height: 56px; color: #333; background: linear-gradient(#fff, #e6e6e6); border-bottom: 4px solid #1f4b9f; }
.w234 { flex: 234 1 0; }
.w240 { flex: 240 1 0; }
.w248 { flex: 248 1 0; }
.w290 { flex: 290 1 0; }
.w322 { flex: 322 1 0; }
.w342 { flex: 342 1 0; }
.w358 { flex: 358 1 0; }
```
